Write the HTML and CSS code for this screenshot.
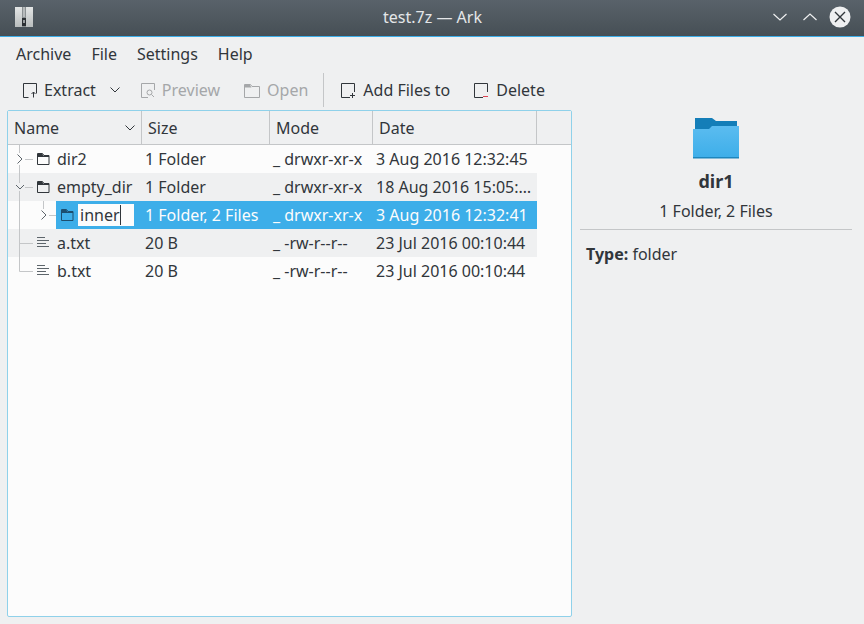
FILE: index.html
```html
<!DOCTYPE html>
<html lang="en">
<head>
    <meta charset="UTF-8">
    <title>test.7z — Ark</title>
    <link rel="stylesheet" href="styles.css">
</head>
<body>
<div class="window">
    <header class="titlebar">
        <div class="title-left">
            <svg class="app-icon" width="18" height="20" viewBox="0 0 18 20">
                <defs>
                    <linearGradient id="zipbg" x1="0" y1="0" x2="0" y2="1">
                        <stop offset="0" stop-color="#e4e6e6"/>
                        <stop offset="1" stop-color="#b9bdbd"/>
                    </linearGradient>
                </defs>
                <rect width="18" height="20" fill="url(#zipbg)"/>
                <rect x="7" width="4" height="20" fill="#8b9092"/>
                <path d="M8 1h2M8 3h2M8 5h2M8 7h2M8 9h2" stroke="#e4e6e6" stroke-width="1"/>
                <rect x="7" y="11" width="4" height="8" fill="#2b2f33"/>
                <rect x="8" y="13" width="2" height="3" fill="#9a9ea0"/>
            </svg>
        </div>
        <div class="title">test.7z — Ark</div>
        <div class="win-buttons">
            <svg width="14" height="8" viewBox="0 0 14 8"><path d="M.5 1 7 7l6.500-6" class="wb"/></svg>
            <svg width="14" height="8" viewBox="0 0 14 8"><path d="M.5 7 7 1l6.500 6" class="wb"/></svg>
            <svg class="win-close" width="22" height="22" viewBox="0 0 22 22"><circle cx="11" cy="11" r="10.500" fill="#eff0f1"/><path d="M6 6l10 10M16 6 6 16" stroke="#31363b" stroke-width="1.400" fill="none"/></svg>
        </div>
    </header>

    <nav class="menubar">
        <span>Archive</span>
        <span>File</span>
        <span>Settings</span>
        <span>Help</span>
    </nav>

    <div class="toolbar">
        <div class="tool tool-extract">
            <svg width="16" height="16" viewBox="0 0 16 16"><path d="M6.500 15.500H1.500V1.500h13v10" class="ic"/><path d="M11.500 15.500V10M9.500 12l2-2 2 2" class="ic"/></svg>
            <span>Extract</span>
        </div>
        <svg class="tool-arrow" width="10" height="6" viewBox="0 0 10 6"><path d="M.5.500 5 5 9.500.500" class="ic"/></svg>
        <div class="tool tool-preview disabled">
            <svg width="16" height="16" viewBox="0 0 16 16"><path d="M8 15.500H1.500V1.500h13V8" class="ic-off"/><circle cx="9.500" cy="10.500" r="2.500" class="ic-off"/><path d="M11.500 12.500l2.500 2.500" class="ic-off"/></svg>
            <span>Preview</span>
        </div>
        <div class="tool tool-open disabled">
            <svg width="16" height="16" viewBox="0 0 16 16"><path d="M.5 2.500v13h15v-11H8l-1.500-2z" class="ic-off"/><path d="M1 3h5l1.500 2.500H1z" fill="#a5a7a9"/></svg>
            <span>Open</span>
        </div>
        <div class="tool-sep"></div>
        <div class="tool tool-add">
            <svg width="15" height="16" viewBox="0 0 15 16"><path d="M9 15.500H.5V1.500h13V10" class="ic"/><path d="M11.500 11v5M9 13.500h5" class="ic"/></svg>
            <span>Add Files to</span>
        </div>
        <div class="tool tool-delete">
            <svg width="15" height="16" viewBox="0 0 15 16"><path d="M9 15.500H.5V1.500h13V10" class="ic"/><path d="M9 14.500h5" stroke="#da4453" fill="none"/></svg>
            <span>Delete</span>
        </div>
    </div>

    <main class="content">
        <section class="tree-frame">
            <div class="tree-head">
                <div class="hcell hcell-name">Name
                    <svg width="10" height="6" viewBox="0 0 10 6"><path d="M.5.500 5 5 9.500.500" class="ic"/></svg>
                </div>
                <div class="hcell">Size</div>
                <div class="hcell">Mode</div>
                <div class="hcell">Date</div>
                <div class="hcell hcell-rest"></div>
            </div>

            <div class="row">
                <div class="name">
                    <svg class="gutter" width="28" height="28" viewBox="0 0 28 28">
                        <path d="M11.500 0v8M11.500 20v8M17 14.500h8" class="tl"/>
                        <path d="M9.500 9.500l4.500 4.500-4.500 4.500" class="ic-tw"/>
                    </svg>
                    <svg class="fold" width="13" height="12" viewBox="0 0 13 12"><use href="#folder-small"/></svg>
                    <span>dir2</span>
                </div>
                <div class="cell">1 Folder</div>
                <div class="cell">_ drwxr-xr-x</div>
                <div class="cell">3 Aug 2016 12:32:45</div>
            </div>

            <div class="row alt">
                <div class="name">
                    <svg class="gutter" width="28" height="28" viewBox="0 0 28 28">
                        <path d="M11.500 0v10M11.500 18v10M17 14.500h8" class="tl"/>
                        <path d="M8 12l4 4 4-4" class="ic-tw"/>
                    </svg>
                    <svg class="fold" width="13" height="12" viewBox="0 0 13 12"><use href="#folder-small"/></svg>
                    <span>empty_dir</span>
                </div>
                <div class="cell">1 Folder</div>
                <div class="cell">_ drwxr-xr-x</div>
                <div class="cell cell-cut">18 Aug 2016 15:05:…</div>
            </div>

            <div class="row row-sel">
                <div class="name">
                    <svg class="gutter" width="48" height="28" viewBox="0 0 48 28">
                        <path d="M11.500 0v28M35.500 0v8M41 14.500h7" class="tl"/>
                        <path d="M33.500 9.500l4.500 4.500-4.500 4.500" class="ic-tw"/>
                    </svg>
                    <div class="name-sel">
                        <svg class="fold-sel" width="13" height="12" viewBox="0 0 13 12">
                            <path d="M.5 11.500V.5h5l1.500 2h5v9zM.5 3.500h11.500" fill="none" stroke="#1c4f70"/>
                            <path d="M1 1h4.300l1.500 2H1z" fill="#1c4f70"/>
                        </svg>
                        <div class="editor">inner</div>
                    </div>
                </div>
                <div class="cell">1 Folder, 2 Files</div>
                <div class="cell">_ drwxr-xr-x</div>
                <div class="cell">3 Aug 2016 12:32:41</div>
            </div>

            <div class="row alt">
                <div class="name">
                    <svg class="gutter" width="28" height="28" viewBox="0 0 28 28"><path d="M11.500 0v28M12 14.500h13" class="tl"/></svg>
                    <svg class="fold" width="13" height="12" viewBox="0 0 13 12"><use href="#text-small"/></svg>
                    <span>a.txt</span>
                </div>
                <div class="cell">20 B</div>
                <div class="cell">_ -rw-r--r--</div>
                <div class="cell">23 Jul 2016 00:10:44</div>
            </div>

            <div class="row">
                <div class="name">
                    <svg class="gutter" width="28" height="28" viewBox="0 0 28 28"><path d="M11.500 0v14.500H25" class="tl"/></svg>
                    <svg class="fold" width="13" height="12" viewBox="0 0 13 12"><use href="#text-small"/></svg>
                    <span>b.txt</span>
                </div>
                <div class="cell">20 B</div>
                <div class="cell">_ -rw-r--r--</div>
                <div class="cell">23 Jul 2016 00:10:44</div>
            </div>
        </section>

        <aside class="info">
            <svg class="big-folder" width="46" height="42" viewBox="0 0 46 42">
                <defs>
                    <linearGradient id="fold" x1="0" y1="0" x2="0" y2="1">
                        <stop offset="0" stop-color="#5bbcf0"/>
                        <stop offset="1" stop-color="#3daee9"/>
                    </linearGradient>
                </defs>
                <path d="M2 1h17l4 3h21v8H2z" fill="#147eb8"/>
                <path d="M0 12h16l3-3h27v32H0z" fill="url(#fold)"/>
                <rect y="40" width="46" height="1.500" fill="#1d86bd"/>
            </svg>
            <div class="info-name">dir1</div>
            <div class="info-sub">1 Folder, 2 Files</div>
            <div class="info-line"></div>
            <div class="info-type"><b>Type:</b> folder</div>
        </aside>
    </main>
</div>

<svg class="defs" width="0" height="0">
    <symbol id="folder-small" viewBox="0 0 13 12">
        <path d="M.5 11.500V.5h5l1.500 2h5v9zM.5 3.500h11.500" fill="none" stroke="#31363b"/>
        <path d="M1 1h4.300l1.500 2H1z" fill="#31363b"/>
    </symbol>
    <symbol id="text-small" viewBox="0 0 13 12">
        <path d="M0 .5h8M0 3.500h12M0 6.500h9M0 9.500h12" stroke="#5d656b" fill="none"/>
    </symbol>
</svg>
</body>
</html>
```

FILE: styles.css
```css
* {
    box-sizing: border-box;
}

html, body {
    margin: 0;
    padding: 0;
    background-color: #eff0f1;
}

body {
    font-family: "Noto Sans", sans-serif;
    font-size: 16px;
    line-height: 22px;
    color: #31363b;
    overflow: hidden;
}

.window {
    width: 864px;
    height: 624px;
    display: flex;
    flex-direction: column;
    background-color: #eff0f1;
}

.titlebar {
    height: 37px;
    flex: none;
    display: grid;
    grid-template-columns: 1fr auto 1fr;
    align-items: center;
    padding: 0 13px 2px 15px;
    background: linear-gradient(#59626a, #464f55);
    border-bottom: 1px solid #3daee9;
}

.title {
    color: #e4e6e8;
    margin-left: -1px;
}

.title-left {
    display: flex;
    align-items: center;
}

.app-icon {
    flex: none;
}

.win-buttons {
    display: flex;
    align-items: center;
    justify-content: flex-end;
    gap: 16px;
}

.win-close {
    margin-left: -4px;
}

.wb {
    fill: none;
    stroke: #eff0f1;
    stroke-width: 1.200;
}

.menubar {
    height: 35px;
    flex: none;
    display: flex;
    align-items: center;
    gap: 20px;
    padding: 0 0 1px 16px;
}

.toolbar {
    height: 37px;
    flex: none;
    display: flex;
    align-items: center;
    padding-bottom: 2px;
}

.tool {
    display: flex;
    align-items: center;
    gap: 6px;
}

.tool svg {
    flex: none;
}

.tool-extract {
    margin-left: 22px;
}

.tool-arrow {
    margin-left: 14px;
    flex: none;
}

.tool-preview {
    margin-left: 20px;
}

.tool-open {
    margin-left: 24px;
    gap: 7px;
}

.tool-sep {
    width: 1px;
    height: 34px;
    margin-left: 15px;
    background-color: #c4c6c8;
}

.tool-add {
    margin-left: 17px;
    gap: 7px;
}

.tool-delete {
    margin-left: 24px;
    gap: 7px;
}

.disabled {
    color: #a5a7a9;
}

.ic {
    fill: none;
    stroke: #31363b;
}

.ic-tw {
    fill: none;
    stroke: #5d656b;
}

.ic-off {
    fill: none;
    stroke: #a5a7a9;
}

.tl {
    fill: none;
    stroke: #c4c6c8;
}

.content {
    flex: 1;
    display: flex;
    padding: 1px 12px 7px 7px;
    min-height: 0;
}

.tree-frame {
    width: 565px;
    background-color: #fcfcfc;
    border: 1px solid #8fd1ea;
    border-radius: 2px;
}

.tree-head {
    display: grid;
    grid-template-columns: 134px 128px 103px 164px 1fr;
    height: 34px;
    border-bottom: 1px solid #c4c6c8;
    background-color: #eff0f1;
}

.hcell {
    display: flex;
    align-items: center;
    padding-left: 6px;
    border-right: 1px solid #c4c6c8;
}

.hcell-name {
    justify-content: space-between;
    padding-right: 6px;
}

.hcell-rest {
    border-right: none;
}

.row {
    display: grid;
    grid-template-columns: 134px 128px 103px 164px;
    width: 529px;
    height: 28px;
    align-items: center;
}

.alt {
    background-color: #eff0f1;
}

.cell {
    padding-left: 3px;
    white-space: nowrap;
    overflow: hidden;
}

.name {
    display: flex;
    align-items: center;
    height: 28px;
}

.gutter {
    flex: none;
}

.fold {
    flex: none;
    margin-left: 1px;
    margin-right: 7px;
}

.row-sel .cell {
    background-color: #3daee9;
    color: #fcfcfc;
    height: 28px;
    line-height: 28px;
}

.name-sel {
    flex: 1;
    height: 28px;
    display: flex;
    align-items: center;
    background-color: #3daee9;
    padding-left: 5px;
}

.editor {
    width: 56px;
    height: 22px;
    line-height: 22px;
    margin-left: 4px;
    padding-left: 2px;
    background-color: #fcfcfc;
    position: relative;
}

.editor::after {
    content: "";
    position: absolute;
    left: 42px;
    top: 1px;
    width: 1px;
    height: 20px;
    background-color: #31363b;
}

.info {
    width: 272px;
    margin-left: 8px;
    display: flex;
    flex-direction: column;
    align-items: center;
    padding-top: 7px;
}

.big-folder {
    flex: none;
}

.info-name {
    font-weight: 700;
    font-size: 18px;
    line-height: 24px;
    margin-top: 10px;
}

.info-sub {
    margin-top: 7px;
}

.info-line {
    width: 100%;
    height: 1px;
    margin-top: 7px;
    background-color: #c4c6c8;
}

.info-type {
    align-self: flex-start;
    margin-top: 13px;
    padding-left: 6px;
}

.defs {
    position: absolute;
}
```
